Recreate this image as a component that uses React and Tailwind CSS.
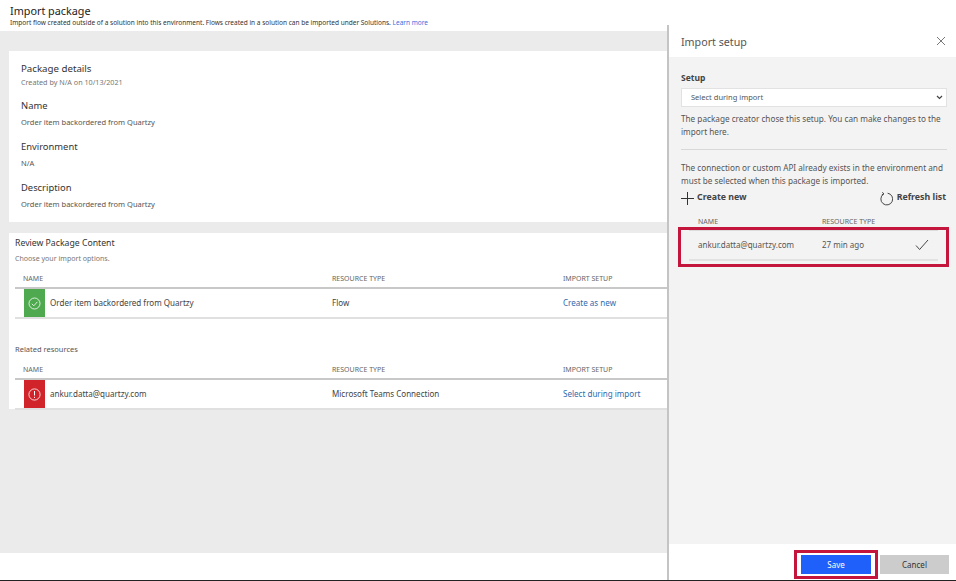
import React from "react";

function Th({ children, className = "" }) {
  return <div className={"text-[7px] leading-[10px] text-[#666] uppercase " + className}>{children}</div>;
}

function ResourceTable({ ok, name, type, setup }) {
  return (
    <div className="ml-[6px]">
      <div className="flex h-[19px] items-center border-b-2 border-[#c8c8c8] pl-[8px]">
        <Th className="w-[309px]">Name</Th>
        <Th className="w-[231px]">Resource type</Th>
        <Th>Import setup</Th>
      </div>
      <div className="flex h-[30px] items-center border-b-2 border-[#e0e0e0] pl-[9px]">
        <div className={"flex h-[28px] w-[21px] items-center justify-center " + (ok ? "bg-[#4fa94f]" : "bg-[#d1242a]")}>
          {ok ? (
            <svg width="13" height="13" viewBox="0 0 13 13" fill="none" stroke="#fff" strokeWidth="0.8">
              <circle cx="6.5" cy="6.5" r="5.5" />
              <path d="M3.8 6.8l2 2 3.6-4" />
            </svg>
          ) : (
            <svg width="13" height="13" viewBox="0 0 13 13" fill="none" stroke="#fff" strokeWidth="0.8">
              <circle cx="6.5" cy="6.5" r="5.6" />
              <path d="M6.5 3v4.5M6.5 8.8v1.1" strokeWidth="1" />
            </svg>
          )}
        </div>
        <div className="w-[287px] pl-[5px] text-[8.05px] text-[#444]">{name}</div>
        <div className="w-[231px] text-[8.05px] text-[#444]">{type}</div>
        <div className="text-[8.05px] text-[#2b6cb0]">{setup}</div>
      </div>
    </div>
  );
}

function Field({ label, value }) {
  return (
    <div className="mb-[12px]">
      <div className="text-[9.4px] leading-[13px] text-[#333]">{label}</div>
      <div className="mt-[5px] text-[7.5px] leading-[11px] text-[#555]">{value}</div>
    </div>
  );
}

export default function App() {
  return (
    <div className="relative flex h-[581px] w-[956px] flex-col overflow-hidden bg-white font-['Noto_Sans',sans-serif]">
      <header className="h-[31px] pl-[10px] pt-[3px]">
        <h1 className="text-[10.8px] leading-[15px] text-[#222]">Import package</h1>
        <p className="text-[6.53px] leading-[9px] text-[#333]">
          Import flow created outside of a solution into this environment. Flows created in a solution can be imported under Solutions. <span className="text-[#3b6fe0]">Learn more</span>
        </p>
      </header>

      <main className="flex-1 bg-[#ebebeb] pl-[9px] pt-[20px]">
        <section className="h-[171px] bg-white pl-[12px] pt-[11px]">
          <h2 className="text-[9.7px] leading-[14px] text-[#333]">Package details</h2>
          <p className="mb-[12px] mt-[1px] text-[7.2px] leading-[10px] text-[#777]">Created by N/A on 10/13/2021</p>
          <Field label="Name" value="Order item backordered from Quartzy" />
          <Field label="Environment" value="N/A" />
          <Field label="Description" value="Order item backordered from Quartzy" />
        </section>

        <section className="mt-[11px] h-[176px] bg-white pt-[4px]">
          <h2 className="pl-[6px] text-[8.7px] leading-[13px] text-[#333]">Review Package Content</h2>
          <p className="mb-[7px] mt-[3px] pl-[6px] text-[7.05px] leading-[10px] text-[#777]">Choose your import options.</p>
          <ResourceTable ok name="Order item backordered from Quartzy" type="Flow" setup="Create as new" />
          <p className="mb-[6px] mt-[25px] pl-[6px] text-[7.5px] leading-[11px] text-[#555]">Related resources</p>
          <ResourceTable name="ankur.datta@quartzy.com" type="Microsoft Teams Connection" setup="Select during import" />
        </section>
      </main>

      <footer className="h-[28px] border-b border-[#222] bg-white" />

      <aside className="absolute bottom-[1px] left-[667px] top-[25px] flex w-[289px] flex-col border-l-2 border-[#c4c4c4] bg-[#f3f3f3]">
        <div className="flex h-[32px] items-center justify-between bg-white pl-[12px] pr-[10px]">
          <span className="pt-[2px] text-[10.7px] text-[#555]">Import setup</span>
          <svg width="10" height="10" viewBox="0 0 10 10" stroke="#555" strokeWidth="0.8">
            <path d="M1 1l8 8M9 1l-8 8" />
          </svg>
        </div>

        <div className="flex-1 pl-[12px] pr-[9px] pt-[15px]">
          <div className="text-[8.5px] font-bold leading-[12px] text-[#444]">Setup</div>
          <div className="mt-[4px] flex h-[19px] w-[266px] items-center justify-between border border-[#e2e2e2] bg-white pl-[9px] pr-[3px]">
            <span className="text-[7.5px] text-[#555]">Select during import</span>
            <svg width="7" height="5" viewBox="0 0 7 5" fill="none" stroke="#444" strokeWidth="1.2">
              <path d="M1 1l2.5 2.5L6 1" />
            </svg>
          </div>
          <p className="mt-[5px] border-b border-[#d8d8d8] pb-[11px] text-[8.2px] leading-[13px] text-[#555]">
            The package creator chose this setup. You can make changes to the import here.
          </p>
          <p className="mt-[11px] text-[8.2px] leading-[13px] text-[#555]">
            The connection or custom API already exists in the environment and must be selected when this package is imported.
          </p>
          <div className="mt-[1px] flex h-[20px] items-center justify-between pr-[1px]">
            <div className="flex items-center gap-[3px]">
              <svg width="13" height="13" viewBox="0 0 13 13" stroke="#333" strokeWidth="1">
                <path d="M6.5 0v13M0 6.5h13" />
              </svg>
              <span className="text-[8.8px] font-bold text-[#444]">Create new</span>
            </div>
            <div className="flex items-center gap-[4px]">
              <svg width="13" height="15" viewBox="0 0 13 15" fill="none" stroke="#333" strokeWidth="0.9">
                <path d="M3.4 3.2A5.9 5.9 0 1 0 7.6 2.2" />
                <path d="M2.4 1.2l1.4 1.8-2 0.9" />
              </svg>
              <span className="text-[8.8px] font-bold text-[#444]">Refresh list</span>
            </div>
          </div>

          <div className="relative mt-[6px]">
            <div className="ml-[8px] mr-[9px] flex h-[17px] items-center border-b-2 border-[#dcdcdc] pl-[9px]">
              <Th className="w-[124px]">Name</Th>
              <Th>Resource type</Th>
            </div>
            <div className="ml-[8px] mr-[9px] flex h-[30px] items-center border-b-2 border-[#e2e2e2] pl-[9px]">
              <span className="w-[124px] text-[8px] text-[#555]">ankur.datta@quartzy.com</span>
              <span className="w-[93px] text-[8px] text-[#555]">27 min ago</span>
              <svg width="14" height="12" viewBox="0 0 14 12" fill="none" stroke="#333" strokeWidth="0.9">
                <path d="M1 6.5l3.6 4L13 1" />
              </svg>
            </div>
            <div className="absolute left-[-3px] right-[-2px] top-[13px] h-[40px] border-[3px] border-[#c4163c]" />
          </div>
        </div>

        <div className="flex h-[36px] items-center justify-end gap-[2px] bg-white pr-[7px] pt-[5px]">
          <div className="border-[3px] border-[#c4163c] px-[4px] py-[2px]">
            <button className="flex h-[19px] w-[70px] items-center justify-center bg-[#1f5ffa] text-[8px] text-white">Save</button>
          </div>
          <button className="flex h-[19px] w-[69px] items-center justify-center bg-[#cccccc] text-[8px] text-[#333]">Cancel</button>
        </div>
      </aside>
    </div>
  );
}
